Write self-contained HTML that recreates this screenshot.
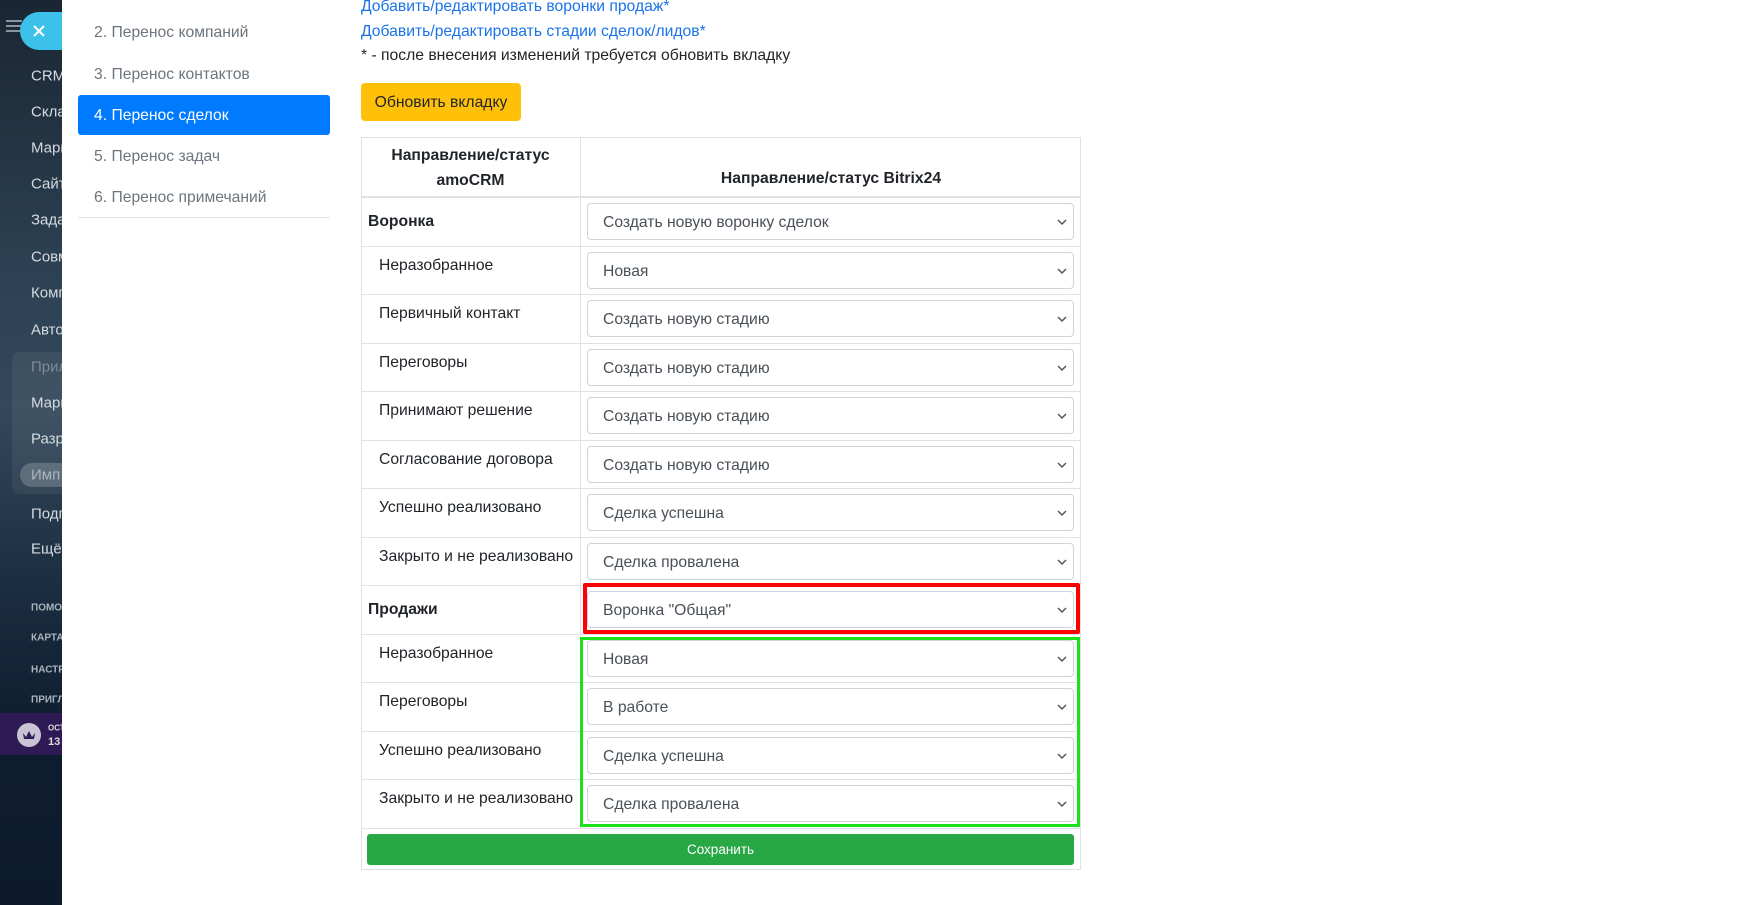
<!DOCTYPE html>
<html><head><meta charset="utf-8"><style>
*{box-sizing:border-box;margin:0;padding:0}
body{width:1764px;height:905px;overflow:hidden;background:#fff;font-family:"Liberation Sans","DejaVu Sans",sans-serif;position:relative}
.sb{position:absolute;left:0;top:0;width:62px;height:905px;background:linear-gradient(180deg,#1a2633 0%,#2c4153 30%,#33495b 45%,#1b2d40 65%,#0f1d30 80%,#0c1a2c 100%);overflow:hidden}
.sb .t{position:absolute;left:31px;color:#d5dbe0;font-size:15px;white-space:nowrap;transform:translateY(-50%)}
.sb .s{position:absolute;left:31px;color:#aab4bd;font-size:10px;font-weight:bold;white-space:nowrap;transform:translateY(-50%)}
.nav{position:absolute;left:94px;color:#6c757d;font-size:15.7px;transform:translateY(-50%);white-space:nowrap}
.link{position:absolute;left:361px;color:#1a73e8;font-size:15.7px;transform:translateY(-50%);white-space:nowrap}
.row{position:absolute;left:361px;width:720px;border-bottom:1px solid #dee2e6}
.lab{position:absolute;font-size:15.7px;color:#212529;white-space:nowrap}
.sel{position:absolute;left:587px;width:487px;height:37px;border:1px solid #ced4da;border-radius:4px;background:#fff;color:#495057;font-size:15.7px;line-height:37px;padding-left:15px}
.sel svg{position:absolute;right:6px;top:15px}
</style></head><body>
<div class="sb">
 <div style="position:absolute;left:6px;top:20px;width:16px;height:2px;background:#8a95a0;box-shadow:0 5px 0 #8a95a0,0 10px 0 #8a95a0"></div>
 <div style="position:absolute;left:20px;top:12px;width:70px;height:38px;border-radius:19px;background:#3bc1ea"></div>
 <svg style="position:absolute;left:33px;top:25px" width="12" height="12"><path d="M1 1 L11 11 M11 1 L1 11" stroke="#fff" stroke-width="2"/></svg>
 <div style="position:absolute;left:12px;top:352px;width:60px;height:142px;border-radius:8px;background:rgba(255,255,255,0.06)"></div>
 <div style="position:absolute;left:20px;top:463px;width:60px;height:24px;border-radius:12px;background:rgba(255,255,255,0.2)"></div>
 <div class="t" style="top:76px">CRM</div><div class="t" style="top:112px">Склад</div><div class="t" style="top:148px">Марк</div><div class="t" style="top:184px">Сайты</div><div class="t" style="top:220px">Задачи</div><div class="t" style="top:257px">Совм</div><div class="t" style="top:293px">Комп</div><div class="t" style="top:330px">Авто</div><div class="t" style="top:367px;color:#7f8b96">Прил</div><div class="t" style="top:403px">Марк</div><div class="t" style="top:439px">Разр</div><div class="t" style="top:475px;color:#aeb6bd">Имп</div><div class="t" style="top:514px">Подп</div><div class="t" style="top:549px">Ещё</div>
 <div class="s" style="top:608px">ПОМОЩЬ</div><div class="s" style="top:638px">КАРТА</div><div class="s" style="top:670px">НАСТР</div><div class="s" style="top:700px">ПРИГЛ</div>
 <div style="position:absolute;left:0;top:713px;width:62px;height:42px;background:#2e1a55"></div>
 <div style="position:absolute;left:17px;top:723px;width:24px;height:24px;border-radius:50%;background:#c9c4d4"></div>
 <svg style="position:absolute;left:21px;top:729px" width="16" height="12"><path d="M2 4 L5 8 L8 2 L11 8 L14 4 L13 10 L3 10Z" fill="#2e1a55"/></svg>
 <div class="s" style="top:728px;left:48px;font-size:8px;color:#ddd">ОСТ</div><div class="s" style="top:742px;left:48px;font-size:11px;color:#ddd">13</div>
</div>

<div class="nav" style="top:-8px">1. Перенос</div>
<div class="nav" style="top:33px">2. Перенос компаний</div>
<div class="nav" style="top:75px">3. Перенос контактов</div>
<div style="position:absolute;left:78px;top:95px;width:252px;height:40px;background:#007bff;border-radius:3px"></div>
<div class="nav" style="top:116px;color:#fff">4. Перенос сделок</div>
<div class="nav" style="top:157px">5. Перенос задач</div>
<div class="nav" style="top:198px">6. Перенос примечаний</div>
<div style="position:absolute;left:78px;top:217px;width:252px;height:1px;background:#dee2e6"></div>

<div class="link" style="top:7px">Добавить/редактировать воронки продаж*</div>
<div class="link" style="top:32px">Добавить/редактировать стадии сделок/лидов*</div>
<div class="link" style="top:56px;color:#212529">* - после внесения изменений требуется обновить вкладку</div>
<div style="position:absolute;left:361px;top:83px;width:160px;height:38px;background:#ffc107;border-radius:4px;font-size:15.7px;color:#212529;line-height:40px;text-align:center">Обновить вкладку</div>

<div style="position:absolute;left:361px;top:137px;width:720px;height:733px;border:1px solid #dee2e6"></div>
<div style="position:absolute;left:580px;top:137px;width:1px;height:691px;background:#dee2e6"></div>
<div style="position:absolute;left:361px;top:196px;width:720px;height:2px;background:#dee2e6"></div>
<div class="lab" style="left:361px;width:219px;top:143px;text-align:center;font-weight:bold;line-height:25px">Направление/статус<br>amoCRM</div>
<div class="lab" style="left:581px;width:500px;top:170px;text-align:center;font-weight:bold">Направление/статус Bitrix24</div>

<div id="rows"></div>
<script>
var R=[["Воронка",1,"Создать новую воронку сделок"],["Неразобранное",0,"Новая"],["Первичный контакт",0,"Создать новую стадию"],["Переговоры",0,"Создать новую стадию"],["Принимают решение",0,"Создать новую стадию"],["Согласование договора",0,"Создать новую стадию"],["Успешно реализовано",0,"Сделка успешна"],["Закрыто и не реализовано",0,"Сделка провалена"],["Продажи",1,'Воронка "Общая"'],["Неразобранное",0,"Новая"],["Переговоры",0,"В работе"],["Успешно реализовано",0,"Сделка успешна"],["Закрыто и не реализовано",0,"Сделка провалена"]];
var h="";
for(var i=0;i<R.length;i++){var t=198+i*48.5;
h+='<div class="row" style="top:'+t+'px;height:48.5px"></div>';
if(R[i][1])h+='<div class="lab" style="left:368px;top:'+(t+15)+'px;font-weight:bold">'+R[i][0]+'</div>';
else h+='<div class="lab" style="left:379px;top:'+(t+10)+'px">'+R[i][0]+'</div>';
h+='<div class="sel" style="top:'+(t+5)+'px">'+R[i][2]+'<svg width="10" height="7"><path d="M1 1 L5 5 L9 1" stroke="#555" stroke-width="1.5" fill="none"/></svg></div>';}
document.getElementById("rows").innerHTML=h;
</script>
<div style="position:absolute;left:583px;top:583px;width:497px;height:51px;border:4px solid #f00;border-radius:2px"></div>
<div style="position:absolute;left:580px;top:637px;width:500px;height:190px;border:3px solid #1be01b"></div>
<div style="position:absolute;left:367px;top:834px;width:707px;height:31px;background:#28a745;border-radius:3px;color:#fff;font-size:13.5px;line-height:31px;text-align:center">Сохранить</div>
</body></html>
